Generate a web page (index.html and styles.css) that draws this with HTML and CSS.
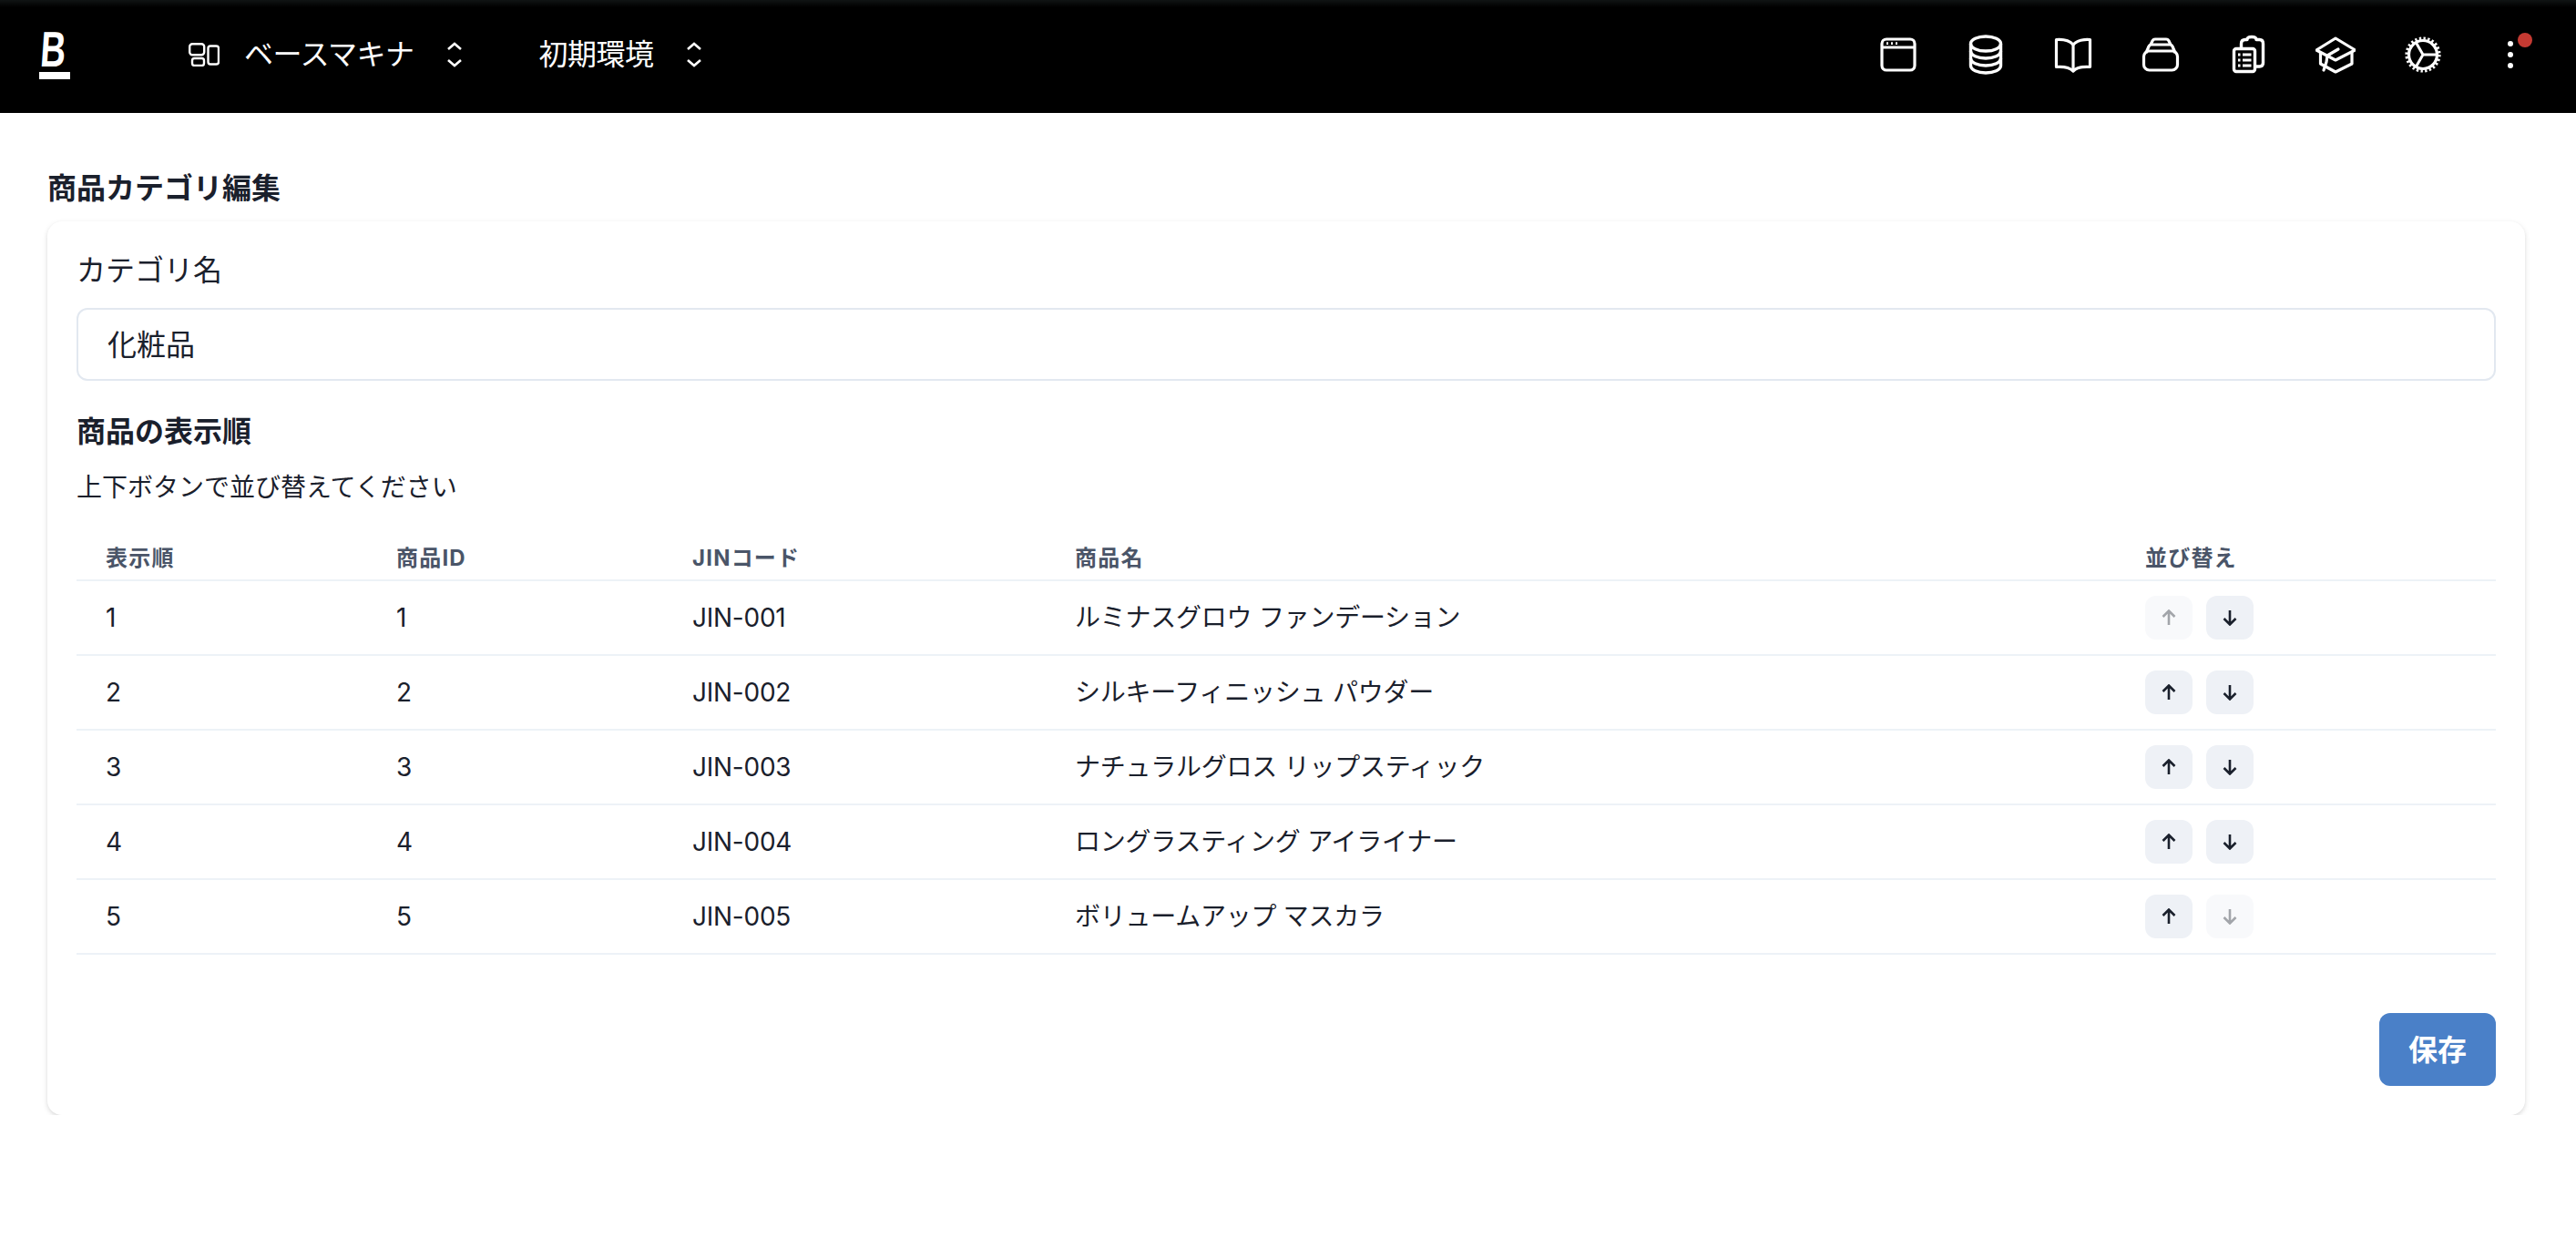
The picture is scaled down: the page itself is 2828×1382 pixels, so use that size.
FILE: index.html
```html
<!DOCTYPE html>
<html lang="ja">
<head>
  <meta charset="UTF-8" />
  <title>商品カテゴリ編集</title>
  <link rel="stylesheet" href="styles.css">
</head>
<body>
  <header class="topbar">
    <div class="logo"><span class="logo-b">B</span><span class="logo-bar"></span></div>

    <div class="switcher switcher-machine">
      <svg class="switcher-icon" viewBox="0 0 34 26" fill="none" stroke="#fff" stroke-width="2.4">
        <rect x="1.2" y="1.2" width="16" height="12" rx="3" />
        <rect x="4" y="17" width="13" height="8" rx="2.5" />
        <rect x="21.5" y="3.5" width="11.5" height="20" rx="2.5" />
      </svg>
      <span class="switcher-text">ベースマキナ</span>
      <svg class="chevrons" viewBox="0 0 18 28" fill="none" stroke="#fff" stroke-width="2.6">
        <path d="M2 8l7-6 7 6" />
        <path d="M2 20l7 6 7-6" />
      </svg>
    </div>

    <div class="switcher switcher-env">
      <span class="switcher-text">初期環境</span>
      <svg class="chevrons" viewBox="0 0 18 28" fill="none" stroke="#fff" stroke-width="2.6">
        <path d="M2 8l7-6 7 6" />
        <path d="M2 20l7 6 7-6" />
      </svg>
    </div>

    <nav class="tools">
      <span class="tool">
        <svg viewBox="0 0 44 44" fill="none" stroke="#fff" stroke-width="3.200">
          <rect x="4" y="5" width="36" height="34" rx="5" />
          <path d="M4 14h36" />
          <path d="M9 9.600h2M14 9.600h2M19 9.600h2" stroke-width="2.600" />
        </svg>
      </span>
      <span class="tool">
        <svg viewBox="0 0 44 44" fill="none" stroke="#fff" stroke-width="3.400">
          <ellipse cx="22" cy="10" rx="16.500" ry="8" />
          <path d="M5.500 10v24c0 4.500 7.500 8 16.500 8s16.500-3.500 16.500-8V10" />
          <path d="M5.500 18c0 4.500 7.500 8 16.500 8s16.500-3.500 16.500-8" />
          <path d="M5.500 26c0 4.500 7.500 8 16.500 8s16.500-3.500 16.500-8" />
        </svg>
      </span>
      <span class="tool">
        <svg viewBox="0 0 44 44" fill="none" stroke="#fff" stroke-width="3.200" stroke-linejoin="round">
          <path d="M22 11C18 6.500 10 5 3.500 5.500v30C10 35 18 36 22 40c4-4 12-5 18.500-4.500v-30C34 5 26 6.500 22 11z" />
          <path d="M22 11v29" />
        </svg>
      </span>
      <span class="tool">
        <svg viewBox="0 0 44 44" fill="none" stroke="#fff" stroke-width="3.200" stroke-linejoin="round">
          <rect x="3.500" y="18" width="37" height="21" rx="6" />
          <path d="M6 20l3-7c.5-1.300 1.500-2 3-2h20c1.500 0 2.500.7 3 2l3 7" />
          <path d="M11 11l2-4c.5-1.300 1.500-2 3-2h12c1.500 0 2.500.7 3 2l2 4" />
        </svg>
      </span>
      <span class="tool">
        <svg viewBox="0 0 44 44" fill="none" stroke="#fff" stroke-width="3.400" stroke-linejoin="round">
          <rect x="6.500" y="15.500" width="23" height="25" rx="2.500" />
          <path d="M14.500 15v-5c0-3 2-4.500 4.500-4.500h2C21 3 23 2.500 26 2.500S31 3 31 5.500h3.500c2.500 0 4 1.500 4 4.500v21c0 2.500-1.500 4-4 4H30" />
          <path d="M16 22h9.500M16 28h9.500M16 34h9.500M11 22h2.500M11 28h2.500M11 34h2.500" stroke-width="2.800" />
        </svg>
      </span>
      <span class="tool">
        <svg viewBox="0 0 44 44" fill="none" stroke="#fff" stroke-width="3.200" stroke-linejoin="round" stroke-linecap="round">
          <path d="M22 4l21.500 13L22 28 1 17z" />
          <path d="M5.500 20v12L22 41l18-9V19" />
          <path d="M25 16l-12 7-1 7-3 9" />
        </svg>
      </span>
      <span class="tool">
        <svg viewBox="0 0 44 44" fill="none" stroke="#fff">
          <circle cx="22" cy="22" r="15.500" stroke-width="3.200" />
          <circle cx="22" cy="22" r="18" stroke-width="3.200" stroke-dasharray="2.350 2.360" />
          <path d="M22 22L14.250 8.600M22 22h15.500M22 22L14.250 35.400" stroke-width="3" />
        </svg>
      </span>
      <span class="tool tool-menu">
        <i class="dot"></i><i class="dot"></i><i class="dot"></i>
        <b class="badge"></b>
      </span>
    </nav>
  </header>

  <main class="page">
    <h1 class="page-title">商品カテゴリ編集</h1>

    <section class="card">
      <label class="field-label" for="name">カテゴリ名</label>
      <input class="field-input" id="name" type="text" value="化粧品" />

      <h2 class="section-title">商品の表示順</h2>
      <p class="section-help">上下ボタンで並び替えてください</p>

      <table class="items">
        <thead>
          <tr>
            <th class="col-order">表示順</th>
            <th class="col-id">商品ID</th>
            <th class="col-code">JINコード</th>
            <th class="col-name">商品名</th>
            <th class="col-sort">並び替え</th>
          </tr>
        </thead>
        <tbody>
          <tr>
            <td>1</td><td>1</td><td>JIN-001</td><td>ルミナスグロウ ファンデーション</td>
            <td>
              <div class="sort">
                <button class="arrow" disabled><svg viewBox="0 0 16 18"><path d="M8 17V2M1.500 8L8 1.500 14.500 8" /></svg></button>
                <button class="arrow"><svg viewBox="0 0 16 18"><path d="M8 1v15M1.500 10L8 16.500 14.500 10" /></svg></button>
              </div>
            </td>
          </tr>
          <tr>
            <td>2</td><td>2</td><td>JIN-002</td><td>シルキーフィニッシュ パウダー</td>
            <td>
              <div class="sort">
                <button class="arrow"><svg viewBox="0 0 16 18"><path d="M8 17V2M1.500 8L8 1.500 14.500 8" /></svg></button>
                <button class="arrow"><svg viewBox="0 0 16 18"><path d="M8 1v15M1.500 10L8 16.500 14.500 10" /></svg></button>
              </div>
            </td>
          </tr>
          <tr>
            <td>3</td><td>3</td><td>JIN-003</td><td>ナチュラルグロス リップスティック</td>
            <td>
              <div class="sort">
                <button class="arrow"><svg viewBox="0 0 16 18"><path d="M8 17V2M1.500 8L8 1.500 14.500 8" /></svg></button>
                <button class="arrow"><svg viewBox="0 0 16 18"><path d="M8 1v15M1.500 10L8 16.500 14.500 10" /></svg></button>
              </div>
            </td>
          </tr>
          <tr>
            <td>4</td><td>4</td><td>JIN-004</td><td>ロングラスティング アイライナー</td>
            <td>
              <div class="sort">
                <button class="arrow"><svg viewBox="0 0 16 18"><path d="M8 17V2M1.500 8L8 1.500 14.500 8" /></svg></button>
                <button class="arrow"><svg viewBox="0 0 16 18"><path d="M8 1v15M1.500 10L8 16.500 14.500 10" /></svg></button>
              </div>
            </td>
          </tr>
          <tr>
            <td>5</td><td>5</td><td>JIN-005</td><td>ボリュームアップ マスカラ</td>
            <td>
              <div class="sort">
                <button class="arrow"><svg viewBox="0 0 16 18"><path d="M8 17V2M1.500 8L8 1.500 14.500 8" /></svg></button>
                <button class="arrow" disabled><svg viewBox="0 0 16 18"><path d="M8 1v15M1.500 10L8 16.500 14.500 10" /></svg></button>
              </div>
            </td>
          </tr>
        </tbody>
      </table>

      <div class="actions">
        <button class="save">保存</button>
      </div>
    </section>
  </main>
</body>
</html>
```

FILE: styles.css
```css
* {
  box-sizing: border-box;
}
body {
  margin: 0;
  background: #fff;
  color: #1a202c;
  font-family: Inter, "Noto Sans CJK JP", sans-serif;
}

/* top bar */
.topbar {
  display: flex;
  align-items: center;
  height: 124px;
  padding-right: 24px;
  padding-bottom: 4px;
  background: linear-gradient(#101414, #000 8px);
  color: #fff;
}
.logo {
  display: flex;
  flex-direction: column;
  width: 34px;
  margin-left: 43px;
}
.logo-b {
  height: 42px;
  font-family: "Liberation Sans", sans-serif;
  font-size: 55px;
  font-weight: 700;
  line-height: 42px;
  transform: skewX(-4deg) scaleX(0.7);
  transform-origin: left bottom;
}
.logo-bar {
  height: 8px;
  margin-top: 4px;
  background: #fff;
}
.switcher {
  display: flex;
  align-items: center;
  font-size: 32px;
  line-height: 48px;
}
.switcher-text {
  letter-spacing: -0.5px;
}
.switcher-machine {
  margin-left: 130px;
}
.switcher-env {
  margin-left: 83px;
}
.switcher-icon {
  width: 34px;
  height: 26px;
  margin-right: 27px;
}
.chevrons {
  width: 18px;
  height: 28px;
  margin-left: 36px;
}
.tools {
  display: flex;
  margin-left: auto;
}
.tool {
  display: flex;
  align-items: center;
  justify-content: center;
  width: 96px;
  height: 48px;
}
.tool svg {
  width: 44px;
  height: 44px;
}
.tool-menu {
  position: relative;
  flex-direction: column;
  gap: 6px;
}
.dot {
  width: 6px;
  height: 6px;
  border-radius: 50%;
  background: #fff;
}
.badge {
  position: absolute;
  top: 0;
  left: 56px;
  width: 16px;
  height: 16px;
  border-radius: 50%;
  background: #c53a32;
}

/* page */
.page {
  padding: 59px 56px 0 52px;
}
.page-title {
  margin: 0 0 12px;
  font-size: 32px;
  font-weight: 700;
  line-height: 48px;
}
.card {
  padding: 30px 32px 32px;
  border-radius: 16px;
  background: #fff;
  box-shadow: 0 2px 6px rgba(0, 0, 0, 0.1), 0 2px 4px rgba(0, 0, 0, 0.06);
}
.field-label {
  display: block;
  margin-bottom: 17px;
  font-size: 32px;
  line-height: 48px;
}
.field-input {
  display: block;
  width: 100%;
  height: 80px;
  padding: 0 32px 4px;
  border: 2px solid #e2e8f0;
  border-radius: 12px;
  color: #1a202c;
  font-family: inherit;
  font-size: 32px;
}
.section-title {
  margin: 32px 0 0;
  font-size: 32px;
  font-weight: 700;
  line-height: 48px;
}
.section-help {
  margin: 16px 0 0;
  font-size: 28px;
  line-height: 42px;
}

/* table */
.items {
  width: 100%;
  margin-top: 23px;
  border-collapse: collapse;
  table-layout: fixed;
}
.items th {
  height: 58px;
  padding: 10px 32px 0;
  border-bottom: 2px solid #edf2f7;
  color: #4a5568;
  font-size: 24px;
  font-weight: 700;
  line-height: 36px;
  letter-spacing: 1.200px;
  text-align: left;
}
.items td {
  height: 82px;
  padding: 0 32px;
  border-bottom: 2px solid #edf2f7;
  font-size: 28px;
  line-height: 42px;
  letter-spacing: -0.250px;
}
.col-order {
  width: 319px;
}
.col-id {
  width: 325px;
}
.col-code {
  width: 420px;
}
.col-name {
  width: 1175px;
}
.col-sort {
  width: 417px;
}
.sort {
  display: flex;
  gap: 15px;
}
.arrow {
  display: flex;
  align-items: center;
  justify-content: center;
  width: 52px;
  height: 48px;
  padding: 0;
  border: none;
  border-radius: 12px;
  background: #eef1f6;
}
.arrow svg {
  width: 16px;
  height: 18px;
  fill: none;
  stroke: #1a202c;
  stroke-width: 2.600;
}
.arrow:disabled {
  opacity: 0.4;
}
.actions {
  display: flex;
  justify-content: flex-end;
  margin-top: 64px;
}
.save {
  width: 128px;
  height: 80px;
  padding: 0 0 4px;
  border: none;
  border-radius: 12px;
  background: #4a80c8;
  color: #fff;
  font-family: inherit;
  font-size: 32px;
  font-weight: 600;
}
```
